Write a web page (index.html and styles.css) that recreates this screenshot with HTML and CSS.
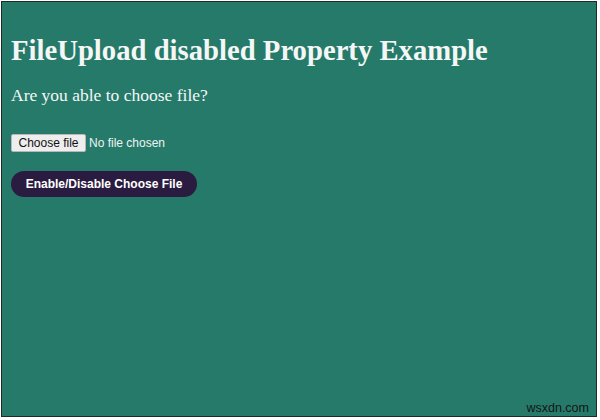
FILE: index.html
```html
<!DOCTYPE html>
<html>
<head>
<meta charset="utf-8">
<link rel="stylesheet" href="styles.css">
</head>
<body>
<div class="frame">
  <h1 class="title">FileUpload disabled Property Example</h1>
  <p class="question">Are you able to choose file?</p>
  <div class="file-row">
    <label class="file-btn">Choose file<input type="file" class="file-input"></label>
    <span class="file-name">No file chosen</span>
  </div>
  <button class="toggle">Enable/Disable Choose File</button>
  <span class="watermark">wsxdn.com</span>
</div>
</body>
</html>
```
FILE: styles.css
```css
html, body {
  margin: 0;
  padding: 0;
  background: #ffffff;
}
.frame {
  position: relative;
  box-sizing: border-box;
  margin: 1px 0 0 1px;
  width: 596px;
  height: 416px;
  border: 1px solid #1e2a28;
  background: #267a6a;
  padding: 32px 0 0 9px;
  font-family: "Liberation Serif", serif;
  color: #f4f7f6;
}
.title {
  margin: 0;
  font-size: 28.7px;
  line-height: 33px;
  font-weight: bold;
}
.question {
  margin: 18px 0 0 0;
  font-size: 17.5px;
  line-height: 20px;
}
.file-row {
  margin-top: 29px;
  height: 18px;
  display: flex;
  align-items: center;
  gap: 3px;
  font-family: "Liberation Sans", sans-serif;
  font-size: 12px;
}
.file-btn {
  box-sizing: border-box;
  height: 18px;
  width: 75px;
  display: flex;
  align-items: center;
  justify-content: center;
  background: #eeeeee;
  color: #111111;
  border: 1px solid #b8b8b8;
  border-radius: 2px;
}
.file-input {
  display: none;
}
.file-name {
  color: #eef3f2;
}
.toggle {
  display: block;
  margin-top: 19px;
  width: 186px;
  height: 26px;
  border: none;
  border-radius: 13px;
  background: #2a1b40;
  color: #ffffff;
  font-family: "Liberation Sans", sans-serif;
  font-size: 12px;
  font-weight: bold;
  padding: 0;
}
.watermark {
  position: absolute;
  right: 7px;
  bottom: 1px;
  font-family: "Liberation Sans", sans-serif;
  font-size: 12.5px;
  color: #151515;
}
```
